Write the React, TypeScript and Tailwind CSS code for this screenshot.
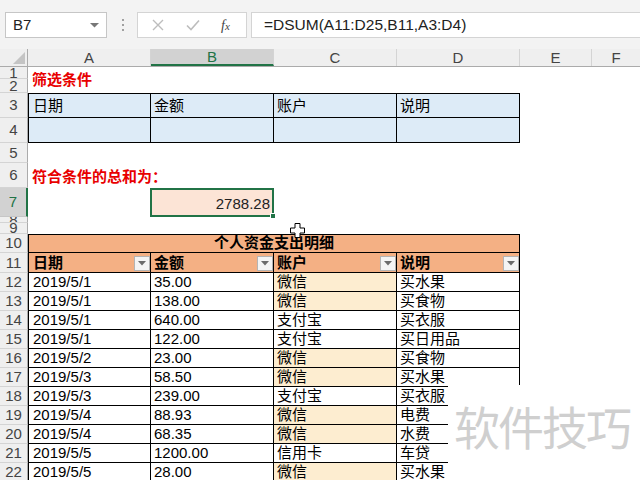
import React from 'react';

type RowData = [string, string, string, string];

const data: RowData[] = [
  ['2019/5/1', '35.00', '微信', '买水果'],
  ['2019/5/1', '138.00', '微信', '买食物'],
  ['2019/5/1', '640.00', '支付宝', '买衣服'],
  ['2019/5/1', '122.00', '支付宝', '买日用品'],
  ['2019/5/2', '23.00', '微信', '买食物'],
  ['2019/5/3', '58.50', '微信', '买水果'],
  ['2019/5/3', '239.00', '支付宝', '买衣服'],
  ['2019/5/4', '88.93', '微信', '电费'],
  ['2019/5/4', '68.35', '微信', '水费'],
  ['2019/5/5', '1200.00', '信用卡', '车贷'],
  ['2019/5/5', '28.00', '微信', '买水果'],
];

function RowHead({ n, sel = false }: { n: number; sel?: boolean }) {
  return (
    <div
      className={
        sel
          ? 'w-[28px] h-full shrink-0 bg-[#d2d2d2] border-r-2 border-r-[#217346] border-b border-b-[#c6c6c6] flex items-center justify-center overflow-hidden text-[15px] leading-[16px] text-[#217346]'
          : 'w-[28px] h-full shrink-0 bg-[#efefef] border-r border-r-[#ababab] border-b border-b-[#d4d4d4] flex items-center justify-center overflow-hidden text-[15px] leading-[16px] text-[#444]'
      }
    >
      {n}
    </div>
  );
}

function FilterBtn() {
  return (
    <div className="ml-auto mb-[1px] w-[16px] h-[15px] shrink-0 border border-[#b4b4b4] bg-[#f4f4f4] flex items-center justify-center">
      <svg width="8" height="5" viewBox="0 0 8 5">
        <path d="M0 0 L8 0 L4 4.5 Z" fill="#6b6b6b" />
      </svg>
    </div>
  );
}

export default function App() {
  return (
    <div className="w-[640px] h-[480px] overflow-hidden relative bg-white text-black font-['Liberation_Sans','Noto_Sans_CJK_SC',sans-serif]">
      {/* toolbar */}
      <div className="h-[49px] bg-[#f3f3f3] flex items-start pt-[12px]">
        <div className="ml-[5px] w-[102px] h-[26px] bg-white border border-[#c6c6c6] flex items-center pl-[7px] text-[15px] text-[#222]">
          <span>B7</span>
          <svg className="ml-auto mr-[7px]" width="9" height="5" viewBox="0 0 9 5">
            <path d="M0 0 L9 0 L4.5 4.5 Z" fill="#777" />
          </svg>
        </div>
        <div className="ml-[15px] mt-[7px] flex flex-col gap-[3px]">
          <div className="w-[2px] h-[2px] bg-[#a0a0a0]" />
          <div className="w-[2px] h-[2px] bg-[#a0a0a0]" />
          <div className="w-[2px] h-[2px] bg-[#a0a0a0]" />
        </div>
        <div className="ml-[13px] w-[110px] h-[26px] bg-white border border-[#d4d4d4] flex items-center">
          <svg className="ml-[14px]" width="12" height="12" viewBox="0 0 12 12">
            <path d="M1 1 L11 11 M11 1 L1 11" stroke="#bdbdbd" strokeWidth="1.4" />
          </svg>
          <svg className="ml-[22px]" width="14" height="12" viewBox="0 0 14 12">
            <path d="M1 6.5 L5 10.5 L13 1.5" stroke="#bdbdbd" strokeWidth="1.6" fill="none" />
          </svg>
          <span className="ml-[21px] text-[14px] italic text-[#444] font-['Liberation_Serif',serif]">
            f<span className="text-[11px]">x</span>
          </span>
        </div>
        <div className="ml-[4px] flex-1 h-[26px] bg-white border border-[#d4d4d4] border-r-0 flex items-center pl-[12px] text-[15.5px] text-[#222] whitespace-nowrap">
          =DSUM(A11:D25,B11,A3:D4)
        </div>
      </div>

      {/* column headers */}
      <div className="h-[18px] flex bg-[#efefef] border-b border-[#ababab] text-[15px] leading-[17px] text-[#444]">
        <div className="w-[28px] shrink-0 border-r border-[#ababab] flex items-end justify-end pr-[2px] pb-[2px]">
          <svg width="12" height="12" viewBox="0 0 12 12">
            <path d="M12 0 L12 12 L0 12 Z" fill="#c4c4c4" />
          </svg>
        </div>
        <div className="w-[123px] shrink-0 border-r border-[#d4d4d4] flex items-center justify-center">A</div>
        <div className="w-[123px] shrink-0 border-r border-[#d4d4d4] bg-[#d2d2d2] border-b-2 border-b-[#217346] flex items-center justify-center text-[#217346]">B</div>
        <div className="w-[123px] shrink-0 border-r border-[#d4d4d4] flex items-center justify-center">C</div>
        <div className="w-[123px] shrink-0 border-r border-[#d4d4d4] flex items-center justify-center">D</div>
        <div className="w-[72px] shrink-0 border-r border-[#d4d4d4] flex items-center justify-center">E</div>
        <div className="flex-1 flex items-center justify-center">F</div>
      </div>

      <div className="text-[15px]">
        {/* row 1 */}
        <div className="h-[12px] flex">
          <RowHead n={1} />
        </div>
        {/* row 2 */}
        <div className="h-[14px] flex">
          <RowHead n={2} />
          <div className="pl-[4px] mt-[-6px] leading-[14px] font-bold text-[#e80000] whitespace-nowrap">筛选条件</div>
        </div>
        {/* row 3 */}
        <div className="h-[25px] flex">
          <RowHead n={3} />
          {['日期', '金额', '账户', '说明'].map((t, i) => (
            <div
              key={t}
              className={
                i === 0
                  ? 'w-[123px] shrink-0 bg-[#ddebf7] border border-black flex items-end pl-[4px] pb-[2px] leading-[18px]'
                  : 'w-[123px] shrink-0 bg-[#ddebf7] border-t border-r border-b border-black flex items-end pl-[3px] pb-[2px] leading-[18px]'
              }
            >
              {t}
            </div>
          ))}
        </div>
        {/* row 4 */}
        <div className="h-[25px] flex">
          <RowHead n={4} />
          <div className="w-[123px] shrink-0 bg-[#ddebf7] border-l border-r border-b border-black" />
          <div className="w-[123px] shrink-0 bg-[#ddebf7] border-r border-b border-black" />
          <div className="w-[123px] shrink-0 bg-[#ddebf7] border-r border-b border-black" />
          <div className="w-[123px] shrink-0 bg-[#ddebf7] border-r border-b border-black" />
        </div>
        {/* row 5 */}
        <div className="h-[20px] flex">
          <RowHead n={5} />
        </div>
        {/* row 6 */}
        <div className="h-[25px] flex">
          <RowHead n={6} />
          <div className="flex items-end pl-[4px] pb-[2px] leading-[18px] font-bold text-[#e80000] whitespace-nowrap">符合条件的总和为：</div>
        </div>
        {/* row 7 */}
        <div className="h-[29px] flex">
          <RowHead n={7} sel />
          <div className="w-[122px] shrink-0" />
          <div className="w-[124px] shrink-0 relative bg-[#fce4d6] border-2 border-[#217346] flex items-end justify-end pr-[2px] pb-[2px] leading-[18px] text-[#222]">
            2788.28
            <div className="absolute right-[-4px] bottom-[-4px] w-[6px] h-[6px] bg-[#217346] border border-white" />
          </div>
        </div>
        {/* row 8 */}
        <div className="h-[6px] flex">
          <RowHead n={8} />
        </div>
        {/* row 9 */}
        <div className="h-[11px] flex">
          <RowHead n={9} />
        </div>
        {/* row 10 */}
        <div className="h-[19px] flex">
          <RowHead n={10} />
          <div className="w-[492px] shrink-0 bg-[#f4b084] border border-black flex items-end justify-center leading-[18px] font-bold">
            个人资金支出明细
          </div>
        </div>
        {/* row 11 */}
        <div className="h-[20px] flex">
          <RowHead n={11} />
          {['日期', '金额', '账户', '说明'].map((t, i) => (
            <div
              key={t}
              className={
                i === 0
                  ? 'w-[123px] shrink-0 bg-[#f4b084] border-l border-r border-b border-black flex items-end pl-[4px] leading-[18px] font-bold'
                  : 'w-[123px] shrink-0 bg-[#f4b084] border-r border-b border-black flex items-end pl-[3px] leading-[18px] font-bold'
              }
            >
              <span>{t}</span>
              <FilterBtn />
            </div>
          ))}
        </div>
        {/* data rows */}
        {data.map((r, idx) => (
          <div key={idx} className="h-[19px] flex">
            <RowHead n={12 + idx} />
            <div className="w-[123px] shrink-0 border-l border-r border-b border-black flex items-end pl-[4px] leading-[18px] whitespace-nowrap">{r[0]}</div>
            <div className="w-[123px] shrink-0 border-r border-b border-black flex items-end pl-[3px] leading-[18px] whitespace-nowrap">{r[1]}</div>
            <div
              className={
                r[2] === '微信'
                  ? 'w-[123px] shrink-0 bg-[#fdedd0] border-r border-b border-black flex items-end pl-[3px] leading-[18px] whitespace-nowrap'
                  : 'w-[123px] shrink-0 border-r border-b border-black flex items-end pl-[3px] leading-[18px] whitespace-nowrap'
              }
            >
              {r[2]}
            </div>
            <div className="w-[123px] shrink-0 border-r border-b border-black flex items-end pl-[3px] leading-[18px] whitespace-nowrap">{r[3]}</div>
          </div>
        ))}
      </div>

      {/* watermark */}
      <div className="absolute left-[448px] top-[385px] w-[192px] h-[95px] bg-white flex items-start pl-[6px] pt-[14px]">
        <span className="text-[46px] leading-[52px] tracking-[-2px] text-[#cfcfcf] font-['Noto_Sans_CJK_SC',sans-serif] whitespace-nowrap">
          软件技巧
        </span>
      </div>

      {/* cursor */}
      <svg className="absolute left-[290px] top-[223px]" width="15" height="15" viewBox="0 0 15 15">
        <path d="M5 0.5 H10 V5 H14.5 V10 H10 V14.5 H5 V10 H0.5 V5 H5 Z" fill="#fff" stroke="#000" strokeWidth="1" />
      </svg>
    </div>
  );
}
